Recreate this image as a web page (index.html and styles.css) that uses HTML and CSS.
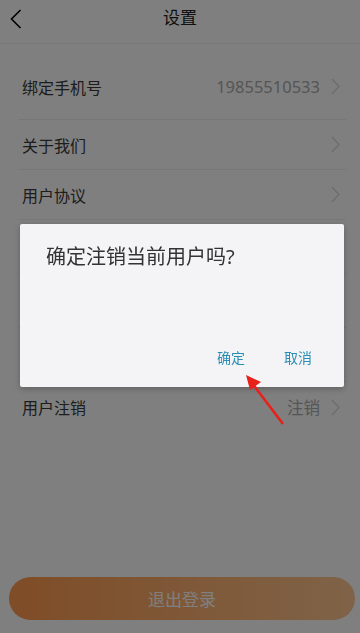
FILE: index.html
```html
<!DOCTYPE html>
<html lang="zh-CN">
<head>
    <meta charset="UTF-8">
    <meta name="viewport" content="width=device-width, initial-scale=1.0">
    <title>设置</title>
    <link rel="stylesheet" href="styles.css">
</head>
<body>
    <div class="page">
        <div class="header">
            <svg class="back" viewBox="0 0 12 20" width="12" height="20">
                <path d="M10.5 1 L1.5 10 L10.5 19" fill="none" stroke="#000" stroke-width="1.6"/>
            </svg>
            <h1 class="title">设置</h1>
        </div>

        <div class="list">
            <div class="row row-first">
                <span class="label">绑定手机号</span>
                <span class="value">19855510533</span>
                <svg class="arrow" viewBox="0 0 9 17" width="9" height="17"><path d="M1 1 L8 8.5 L1 16" fill="none" stroke="#d6d6d6" stroke-width="1.2"/></svg>
            </div>
            <div class="row">
                <span class="label">关于我们</span>
                <svg class="arrow" viewBox="0 0 9 17" width="9" height="17"><path d="M1 1 L8 8.5 L1 16" fill="none" stroke="#d6d6d6" stroke-width="1.2"/></svg>
            </div>
            <div class="row">
                <span class="label">用户协议</span>
                <svg class="arrow" viewBox="0 0 9 17" width="9" height="17"><path d="M1 1 L8 8.5 L1 16" fill="none" stroke="#d6d6d6" stroke-width="1.2"/></svg>
            </div>
            <!-- rows under the dialog are left empty -->
            <div class="row row-blank"></div>
            <div class="row row-blank"></div>
            <div class="row row-blank"></div>
            <div class="row row-last">
                <span class="label">用户注销</span>
                <span class="value">注销</span>
                <svg class="arrow" viewBox="0 0 9 17" width="9" height="17"><path d="M1 1 L8 8.5 L1 16" fill="none" stroke="#d6d6d6" stroke-width="1.2"/></svg>
            </div>
        </div>

        <button class="logout">退出登录</button>
    </div>

    <!-- modal: confirm account cancel -->
    <div class="mask">
        <div class="dialog">
            <p class="dialog-title">确定注销当前用户吗?</p>
            <div class="dialog-actions">
                <span class="action">确定</span>
                <span class="action">取消</span>
            </div>
        </div>
        <svg class="pointer" viewBox="0 0 50 60" width="50" height="60">
            <line x1="43" y1="54" x2="12" y2="13" stroke="#e8201a" stroke-width="2.6"/>
            <polygon points="6,5 21,12 10,20" fill="#e8201a"/>
        </svg>
    </div>
</body>
</html>
```

FILE: styles.css
```css
body {
    font-family: "Noto Sans", "Noto Sans CJK SC", sans-serif;
    background-color: #ffffff;
    margin: 0;
    padding: 0;
    color: #333;
}
.page {
    width: 360px;
    height: 633px;
    display: flex;
    flex-direction: column;
}
.header {
    height: 44px;
    display: flex;
    align-items: center;
    justify-content: center;
    position: relative;
    border-bottom: 1px solid #f2f2f2;
    box-sizing: border-box;
}
.back {
    position: absolute;
    left: 10px;
    top: 9px;
}
.title {
    margin: 0;
    font-size: 17px;
    font-weight: 400;
    color: #222;
    line-height: 24px;
    margin-top: -7px;
}
.list {
    margin: 18px 14px 0 18px;
}
.row {
    height: 50px;
    display: flex;
    align-items: center;
    padding: 0 6px 0 4px;
    border-bottom: 1px solid #eeeeee;
    box-sizing: border-box;
}
.row-first {
    height: 58px;
    padding-bottom: 8px;
}
.row-blank {
    height: 54px;
}
.row-last {
    border-bottom: none;
}
.label {
    flex: 1;
    font-size: 16px;
    color: #3a3a3a;
}
.value {
    font-size: 16.5px;
    color: #ababab;
    margin-right: 11px;
}
.arrow {
    display: block;
}
.logout {
    margin: auto 5px 13px 9px;
    height: 43px;
    border: none;
    border-radius: 22px;
    background: linear-gradient(90deg, #fe9a4e, #ffc690);
    color: #ffffff;
    font-family: inherit;
    font-size: 17px;
}
.mask {
    position: fixed;
    left: 0;
    top: 0;
    width: 360px;
    height: 633px;
    background-color: rgba(0,0,0,0.5);
    padding: 224px 16px 0 20px;
    box-sizing: border-box;
}
.dialog {
    background-color: #f4f4f6;
    border-radius: 2px;
    height: 163px;
    box-shadow: 0 2px 6px rgba(0,0,0,0.25);
    display: flex;
    flex-direction: column;
}
.dialog-title {
    margin: 0;
    padding: 19px 0 0 26px;
    font-size: 20px;
    line-height: 28px;
    color: #333;
}
.dialog-actions {
    margin-top: auto;
    display: flex;
    justify-content: flex-end;
    gap: 39px;
    padding: 0 32px 19px 0;
}
.action {
    font-size: 14px;
    line-height: 20px;
    color: #2a8fb5;
}
.pointer {
    position: absolute;
    left: 240px;
    top: 370px;
}
```
